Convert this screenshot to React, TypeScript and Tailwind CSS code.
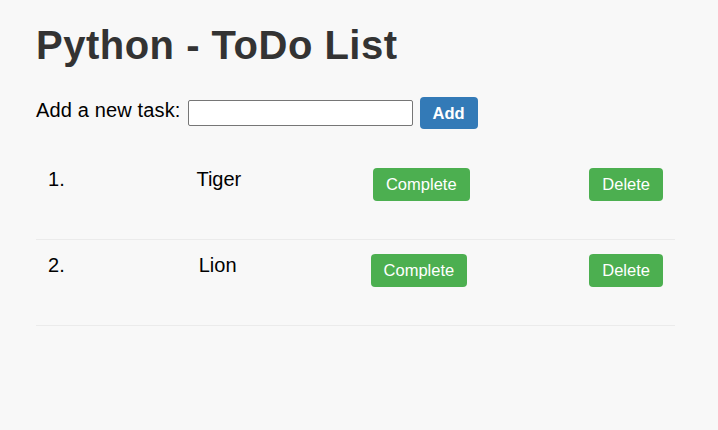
import React from "react";

const tasks = ["Tiger", "Lion"];

export default function App() {
  return (
    <div
      className="min-h-[430px] w-full bg-[#f8f8f8] pt-[22px]"
      style={{ fontFamily: '"Liberation Sans", Arial, sans-serif' }}
    >
      <div className="ml-[36px] w-[639px]">
        <h1 className="text-[40px] font-bold leading-[46px] tracking-[0.5px] text-[#333333]">
          Python - ToDo List
        </h1>
        <div className="mt-[29px] flex items-start">
          <span className="mt-[2px] text-[20px] leading-[23px] tracking-[0.15px] text-black">
            Add a new task:
          </span>
          <input
            type="text"
            className="ml-[7px] mt-[3px] h-[26px] w-[225px] rounded-[2px] border border-[#767676] bg-white px-1 text-[16px] outline-none"
          />
          <button className="ml-[7px] h-[32px] w-[58px] rounded-[4px] bg-[#337ab7] text-[16.5px] font-bold text-white">
            Add
          </button>
        </div>
        <ul className="mt-[25px]">
          {tasks.map((t, i) => (
            <li
              key={t}
              className="flex items-start justify-between border-b border-[#ebebeb] px-3 pt-[14px] pb-[38px]"
            >
              <span className="mr-3 text-[20px] leading-[23px] text-black">
                {i + 1}.
              </span>
              <span className="mr-3 text-[20px] leading-[23px] text-black">
                {t}
              </span>
              <button className="h-[33px] rounded-[4px] bg-[#4caf50] px-[13px] text-[16.5px] text-white">
                Complete
              </button>
              <button className="h-[33px] rounded-[4px] bg-[#4caf50] px-[13px] text-[16.5px] text-white">
                Delete
              </button>
            </li>
          ))}
        </ul>
      </div>
    </div>
  );
}
